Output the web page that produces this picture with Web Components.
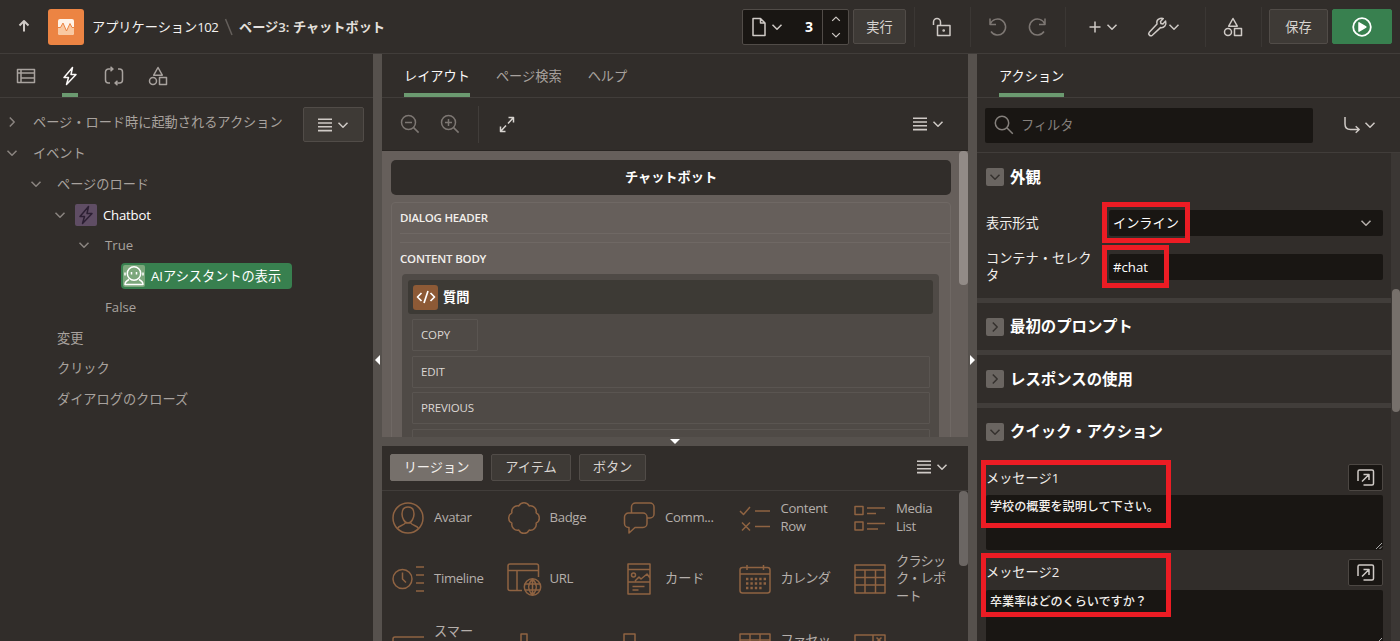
<!DOCTYPE html>
<html lang="ja">
<head>
<meta charset="utf-8">
<title>ページ・デザイナ</title>
<style>
    html, body { margin: 0; height: 100%; overflow: hidden; background: #312d2a; }
    body {
        --line: #413d3a;
        --splitter: #56514d;
        --field: #191613;
        --button: #3e3a36;
        --muted: #a8a29e;
        font: 13.2px/18px "Open Sans", "Noto Sans CJK JP", sans-serif;
        color: #f2efec;
    }
</style>
</head>
<body>
<page-designer></page-designer>
<script>
const ICONS = {
    up: [16, 16, '<path d="M8 13.5V3M3.5 7.5L8 3l4.5 4.5" stroke-width="2"/>'],
    down: [12, 8, '<path d="M1.5 1.8L6 6.2l4.500-4.400"/>'],
    right: [8, 12, '<path d="M1.800 1.500L6.200 6l-4.400 4.500"/>'],
    slash: [10, 20, '<path d="M1.500 2l6.500 16"/>'],
    file: [16, 20, '<path d="M2 1.500h7.500l4.500 4.500v12.500H2zM9.500 1.500V6H14"/>'],
    lock: [20, 20, '<path d="M5.500 8.500h12.500v10H5.500zM1.500 8V5a3.500 3.500 0 0 1 7 0v3.500"/><circle cx="11.700" cy="13.500" r=".6"/>'],
    undo: [20, 20, '<path d="M2 1.500v6h6M2.200 7A8 8 0 1 1 3 14.500" />'],
    redo: [20, 20, '<path d="M18 1.500v6h-6M17.800 7A8 8 0 1 0 17 14.500" />'],
    plus: [12, 12, '<path d="M6 .5v11M.5 6h11"/>'],
    wrench: [20, 20, '<path d="M13 1.500c2-.6 3-.2 3.300 0L13.500 4.500l.4 2 2 .4 2.700-2.800c1.200 4-1.500 7-5.100 6.500l-8.200 7.600c-2 1.700-4.700-.9-3-3L10 7.100c-.6-2.600.7-4.900 3-5.600z"/>'],
    shapes: [20, 20, '<path d="M10 1.500l4.300 7.700H5.700zM11.500 11.500h7v7h-7z"/><circle cx="5" cy="15" r="3.500"/>'],
    play: [20, 20, '<circle cx="10" cy="10" r="8.800" stroke-width="1.800"/><path d="M7 5.800l6.800 4.200L7 14.200z" fill="currentColor"/>'],
    tree: [20, 16, '<path d="M1.500 1.500h17v13h-17zM5 1.500v13M5 5h13.500M5 10h13.500M1.500 5H5"/>'],
    bolt: [16, 20, '<path d="M10.500 1.500L2 11.500h4.500L4.500 18.500 14 8.500H9z"/>'],
    cycle: [20, 20, '<path d="M6 17H4.500a3 3 0 0 1-3-3V6a3 3 0 0 1 3-3H9M6.500.8L9 3 6.500 5.300M14 3h1.500a3 3 0 0 1 3 3v8a3 3 0 0 1-3 3H11M13.500 14.700L11 17l2.500 2.200"/>'],
    lines: [14, 14, '<path d="M0 1.200h14M0 5h14M0 8.800h14M0 12.600h14" stroke-width="1.600"/>'],
    zoomout: [20, 20, '<circle cx="8.500" cy="8.500" r="7"/><path d="M5 8.500h7M13.600 13.600l5 5"/>'],
    zoomin: [20, 20, '<circle cx="8.500" cy="8.500" r="7"/><path d="M5 8.500h7M8.500 5v7M13.600 13.600l5 5"/>'],
    search: [20, 20, '<circle cx="8" cy="8" r="6.700"/><path d="M12.800 12.800l6 6"/>'],
    expand: [16, 17, '<path d="M9.500 1.500h5v5M14.500 1.500l-5.500 6M1.500 10.500v5h5M1.500 15.500l5.500-6"/>'],
    goto: [18, 18, '<path d="M2 1v7c0 4 2 5.500 5.500 5.500H16M12.700 10.300l3.500 3.200-3.500 3.200"/>'],
    popup: [18, 17, '<path d="M1 12V2.500Q1 1 2.500 1H15q1.500 0 1.500 1.500v12q0 1.500-1.500 1.500H6.500M5 12.500l6.500-6.500M6.500 5.500H12V11" stroke-width="1.500"/>'],
    robot: [22, 22, '<circle cx="11" cy="8.500" r="6.700"/><path d="M8.500 7v2.500M13.500 7v2.500M2 7.500v3M20 7.500v3M6 14.500c-2 1-4 2-4 5h18c0-3-2-4-4-5" stroke-width="1.500"/>'],
    code: [20, 14, '<path d="M5.500 3L1.500 7l4 4M14.500 3l4 4-4 4M12 1L8 13" stroke-width="1.700"/>'],
    wave: [16, 16, '<rect width="16" height="16" rx="2" fill="#fff3e8" stroke="none"/><path d="M0 8H2.500L5 4.500 8.500 11.500 12 5 14 8.500H16V14Q16 16 14 16H2Q0 16 0 14z" fill="#f9c9a2" stroke="none"/><path d="M0 8.500h2.500L5 4l3.500 8L12 4.500l2 4h2" stroke="#ec8443" stroke-width="1"/>'],
    avatar: [32, 32, '<circle cx="16" cy="16" r="15"/><path d="M16 5c4 0 6 3 6 7s-2.500 9-6 9-6-5-6-9 2-7 6-7zM5.500 26.500C7 23 12 24 13.500 20.500M26.500 26.500C25 23 20 24 18.500 20.500"/>'],
    badge: [32, 32, '<path d="M10.800 3.900a5.800 5.800 0 0 1 10.400 0a5.800 5.800 0 0 1 6.900 6.900a5.800 5.800 0 0 1 0 10.400a5.800 5.800 0 0 1-6.900 6.900a5.800 5.800 0 0 1-10.400 0a5.800 5.800 0 0 1-6.900-6.900a5.800 5.800 0 0 1 0-10.400a5.800 5.800 0 0 1 6.900-6.900z"/>'],
    comments: [32, 32, '<path d="M5.500 11h14.500a4 4 0 0 1 4 4v6.500a4 4 0 0 1-4 4H12L6 31v-5.500H5.500a4 4 0 0 1-4-4V15a4 4 0 0 1 4-4zM8.500 11V5a4 4 0 0 1 4-4H27a4 4 0 0 1 4 4v7a4 4 0 0 1-4 4H24"/>'],
    content: [32, 32, '<path d="M1 9l3.500 3.500L11 5M16 9h15M3 20.500l8 8M11 20.500l-8 8M16 24.500h15"/>'],
    media: [32, 32, '<path d="M1 4.500h8v8H1zM1 20h8v8H1zM13 6h18M13 11.500h9M13 21.500h18M13 27h11"/>'],
    timeline: [32, 32, '<circle cx="10.500" cy="16" r="9.500"/><path d="M10.500 9.500v6.500l3.500 3.500M24 4h8M24 12h8M24 20h8M24 28h8"/>'],
    url: [34, 34, '<path d="M15 28.500H3a2 2 0 0 1-2-2V4a2 2 0 0 1 2-2h26.500a2 2 0 0 1 2 2v11M1 8.500h30.500M10 8.500v20"/><circle cx="25.500" cy="25" r="8.200"/><path d="M18 22h15M18 28h15M25.500 17v16M25.500 17c-5 5-5 11 0 16M25.500 17c5 5 5 11 0 16"/>'],
    card: [24, 32, '<path d="M1 1h22v30H1zM1 6.500h22M1 19h22M5.500 23.500h12M5.500 27h6M8 18l4-4 2 2 6-5 3 4"/><circle cx="6.500" cy="12" r="2"/>'],
    calendar: [32, 30, '<rect x="1" y="3.500" width="30" height="25.500" rx="2.500"/><path d="M1 10h30M8 1v5M24.500 1v5"/><path d="M7 15h20M7 19.500h20M7 24h16" stroke-width="2.400" stroke-dasharray="2.400 2"/>'],
    report: [32, 30, '<path d="M1 1h30v28H1zM1 6h30M1 13.500h30M1 21h30M11 6v23M21.500 6v23"/>'],
    filter: [32, 32, '<path d="M32 4H3Q1 4 1 6v26M8 16h20"/>'],
    chart: [32, 32, '<path d="M13 32V1h6v31"/>'],
    flow: [32, 32, '<path d="M1 1h11v8H1zM6 9v15h10"/>'],
    facet: [32, 32, '<path d="M1 32V1h30v31M1 7h30M11 1v31M21 1v31"/>'],
    form: [32, 32, '<path d="M1 32V2h30v30M19 2v10M1 12h30M22.500 4.500l5 5M27.500 4.500l-5 5"/>']
};

// define an element from its markup and scoped styles
function define(tag, css, html) {
    const template = document.createElement('template');
    template.innerHTML = `<style>*{box-sizing:border-box} :host{box-sizing:border-box} ${css}</style>${html}`;
    customElements.define(tag, class extends HTMLElement {
        connectedCallback() {
            if (this.shadowRoot) return;
            this.attachShadow({ mode: 'open' });
            this.shadowRoot.appendChild(template.content.cloneNode(true));
        }
    });
}

class UiIcon extends HTMLElement {
    connectedCallback() {
        const [w, h, body] = ICONS[this.getAttribute('name')];
        this.attachShadow({ mode: 'open' });
        this.shadowRoot.innerHTML = `
            <style>
                :host { display: inline-flex; flex: none; }
                svg { display: block; overflow: visible; }
            </style>
            <svg width="${w}" height="${h}" viewBox="0 0 ${w} ${h}" fill="none" stroke="currentColor"
                stroke-width="1.500" stroke-linejoin="round">${body}</svg>`;
    }
}
customElements.define('ui-icon', UiIcon);

define('ui-button', `
    :host { display: flex; align-items: center; justify-content: center; gap: 6px; flex: none;
        height: 35px; background: var(--button); border: 1px solid #514c48; border-radius: 2px; color: #d8d4d0; }
    :host([primary]) { background: #38804f; border-color: #38804f; color: #fff; }
    :host([on]) { background: #76706b; border-color: #76706b; color: #f2efec; }
    :host([small]) { height: 27px; }
    :host([dark]) { background: var(--field); border: 1px solid #4c4743; height: 27px; width: 35px; color: #cfcac6; }
`, '<slot></slot>');

define('menu-button', `
    :host { display: flex; align-items: center; gap: 5px; color: #cfcac6; flex: none; }
`, '<ui-icon name="lines"></ui-icon><ui-icon name="down"></ui-icon>');

define('ui-tab', `
    :host { display: flex; align-items: center; height: 43px; color: var(--muted); border-bottom: 4px solid transparent; padding-top: 4px; flex: none; }
    :host([on]) { color: #fbf9f8; border-color: #6b9a70; }
`, '<slot></slot>');

define('tab-bar', `
    :host { display: flex; height: 44px; border-bottom: 1px solid var(--line); flex: none; }
`, '<slot></slot>');

define('app-header', `
    :host { display: flex; align-items: center; height: 54px; border-bottom: 1px solid var(--line); flex: none; color: #cfcac6; }
    .logo { width: 36px; height: 36px; border-radius: 3px; background: #ec8443; display: grid; place-items: center; margin: 0 8px 0 16px; }
    .crumb { width: 132px; white-space: nowrap; color: #f5f3f1; }
    .crumb i { font-style: normal; letter-spacing: -.6px; }
    .page { width: 356px; white-space: nowrap; font-weight: 600; color: #e4e0dd; }
    .up { width: 32px; padding-left: 16px; padding-top: 3px; }
    .slash { width: 15px; color: #65605c; display: flex; }
    .picker { display: flex; width: 107px; height: 36px; background: var(--field); border: 1px solid #514c48; border-radius: 2px; margin-right: 4px; align-items: center; }
    .picker b { flex: 1; text-align: right; padding-right: 9px; color: #fff; font-size: 14px; }
    .picker > ui-icon:first-child { margin: 0 4px 0 8px; }
    .spin { width: 26px; height: 100%; border-left: 1px solid #514c48; display: flex; flex-direction: column; align-items: center; justify-content: space-between; padding: 5px 0; }
    .spin ui-icon { transform: scale(.85); }
    .spin ui-icon:first-child { transform: scale(.85, -.85); }
    .cell { display: flex; align-items: center; justify-content: center; gap: 5px; height: 40px; border-left: 1px solid #3b3734; padding-right: 2px; }
`, `
    <span class="up"><ui-icon name="up"></ui-icon></span>
    <span class="logo"><ui-icon name="wave"></ui-icon></span>
    <span class="crumb">アプリケーション<i>102</i></span>
    <span class="slash"><ui-icon name="slash"></ui-icon></span>
    <span class="page">ページ3: チャットボット</span>
    <span style="margin-left:auto"></span>
    <span class="picker"><ui-icon name="file"></ui-icon><ui-icon name="down"></ui-icon><b>3</b>
        <span class="spin"><ui-icon name="down"></ui-icon><ui-icon name="down"></ui-icon></span></span>
    <ui-button style="width:53px;margin-right:8px">実行</ui-button>
    <span class="cell" style="width:56px"><ui-icon name="lock"></ui-icon></span>
    <span class="cell" style="width:95px;gap:19px;color:#7d7773"><ui-icon name="undo"></ui-icon><ui-icon name="redo"></ui-icon></span>
    <span class="cell" style="width:140px"><ui-icon name="plus"></ui-icon><ui-icon name="down" style="margin-right:24px"></ui-icon><ui-icon name="wrench"></ui-icon><ui-icon name="down" style="margin-left:-4px"></ui-icon></span>
    <span class="cell" style="width:56px"><ui-icon name="shapes"></ui-icon></span>
    <span class="cell" style="width:8px"></span>
    <ui-button style="width:59px;margin-right:4px">保存</ui-button>
    <ui-button primary style="width:60px;margin-right:8px"><ui-icon name="play"></ui-icon></ui-button>
`);

define('tree-row', `
    :host { display: flex; align-items: center; height: 30.750px; color: var(--muted); white-space: nowrap; }
    .toggle { width: 12px; display: flex; justify-content: center; margin-right: 15px; color: #8b8581; }
`, '<span class="toggle"><slot name="toggle"></slot></span><slot></slot>');

define('action-tree', `
    :host { display: flex; flex-direction: column; width: 373px; flex: none; }
    tab-bar { padding-left: 16px; }
    .main { display: flex; height: 500px; padding-top: 9px; }
    .rows { width: 303px; flex: none; }
    .chat { display: flex; width: 22px; height: 22px; background: #5f4d64; border-radius: 2px; color: #2c1f33; align-items: center; justify-content: center; margin: 0 6px 0 -6px; }
    .sel { display: flex; align-items: center; height: 26px; width: 171px; background: #38804f; border-radius: 4px; color: #fff; padding-left: 2px; margin-left: -3px; }
    .sel i { display: flex; width: 22px; height: 22px; background: #7ca77c; margin-right: 6px; border-radius: 2px; }
    .e { color: #fff; letter-spacing: -.2px; }
`, `
    <tab-bar>
        <ui-tab style="margin-right:26px"><ui-icon name="tree"></ui-icon></ui-tab>
        <ui-tab on style="margin-right:26px"><ui-icon name="bolt"></ui-icon></ui-tab>
        <ui-tab style="margin-right:24px"><ui-icon name="cycle"></ui-icon></ui-tab>
        <ui-tab><ui-icon name="shapes"></ui-icon></ui-tab>
    </tab-bar>
    <div class="main">
        <div class="rows">
            <tree-row style="padding-left:6px"><ui-icon slot="toggle" name="right"></ui-icon>ページ・ロード時に起動されるアクション</tree-row>
            <tree-row style="padding-left:6px"><ui-icon slot="toggle" name="down"></ui-icon>イベント</tree-row>
            <tree-row style="padding-left:30px"><ui-icon slot="toggle" name="down"></ui-icon>ページのロード</tree-row>
            <tree-row style="padding-left:54px"><ui-icon slot="toggle" name="down"></ui-icon><span class="chat"><ui-icon name="bolt"></ui-icon></span><span class="e">Chatbot</span></tree-row>
            <tree-row style="padding-left:78px"><ui-icon slot="toggle" name="down"></ui-icon>True</tree-row>
            <tree-row style="padding-left:97px"><span class="sel"><i><ui-icon name="robot"></ui-icon></i>AIアシスタントの表示</span></tree-row>
            <tree-row style="padding-left:78px">False</tree-row>
            <tree-row style="padding-left:30px">変更</tree-row>
            <tree-row style="padding-left:30px">クリック</tree-row>
            <tree-row style="padding-left:30px">ダイアログのクローズ</tree-row>
        </div>
        <ui-button style="width:61px"><menu-button></menu-button></ui-button>
    </div>
`);

define('split-bar', `
    :host { display: flex; align-items: center; justify-content: center; width: 9px; background: var(--splitter); flex: none; padding-top: 25px; }
    :host([row]) { width: auto; height: 9px; padding: 0; }
    i { border: 5px solid transparent; border-right-color: #fff; border-left: 0; }
    :host([dir=right]) i { border: 5px solid transparent; border-left-color: #fff; border-right: 0; }
    :host([row]) i { border: 5px solid transparent; border-top-color: #fff; border-bottom: 0; }
`, '<i></i>');

define('layout-slot', `
    :host { display: flex; align-items: center; height: 32px; margin: 0 0 4.600px 4px; width: 518px; border: 1px solid #5a5551; padding-left: 8px; font-size: 11.500px; letter-spacing: -.15px; color: #dcd8d4; border-radius: 1px; flex: none; }
`, '<slot></slot>');

define('layout-canvas', `
    :host { display: flex; height: 286px; background: #665f5b; padding: 9px 0 0 9px; overflow: hidden; flex: none; }
    .page { width: 560px; }
    .title { height: 35px; border-radius: 5px; background: #312d2a; text-align: center; line-height: 35px; font-weight: 700; color: #fff; margin-bottom: 7px; }
    .body { border: 1px solid #6f6864; border-radius: 4px; height: 300px; padding: 0 0 0 8px; }
    .head { font-weight: 600; font-size: 11.500px; letter-spacing: -.25px; height: 31px; line-height: 30px; border-bottom: 1px solid #6f6864; margin-bottom: 8px; }
    .content { font-weight: 600; font-size: 11.500px; letter-spacing: -.2px; height: 32px; line-height: 31px; border-top: 1px solid #6f6864; }
    .region { margin-left: 2px; width: 537px; height: 240px; background: #4f4a46; border-radius: 4px 4px 0 0; padding: 6px; }
    .bar { display: flex; align-items: center; height: 34px; background: #3d3a35; border-radius: 3px; padding-left: 5px; font-weight: 700; color: #fff; margin-bottom: 5px; }
    .code { display: flex; width: 25px; height: 25px; align-items: center; justify-content: center; background: #8d5a36; border-radius: 3px; margin-right: 5px; }
    .thumb { margin: -9px 0 0 8px; width: 9px; height: 134px; border-radius: 4px; background: #928b87; }
`, `
    <div class="page">
        <div class="title">チャットボット</div>
        <div class="body">
            <div class="head">DIALOG HEADER</div>
            <div class="content">CONTENT BODY</div>
            <div class="region">
                <div class="bar"><span class="code"><ui-icon name="code"></ui-icon></span>質問</div>
                <layout-slot style="width:66px">COPY</layout-slot>
                <layout-slot>EDIT</layout-slot>
                <layout-slot>PREVIOUS</layout-slot>
                <layout-slot></layout-slot>
            </div>
        </div>
    </div>
    <div class="thumb"></div>
`);

define('gallery-item', `
    :host { display: flex; align-items: center; color: #b5afab; line-height: 17.500px; }
    :host([latin]) { letter-spacing: -.35px; }
    .icon { width: 32px; display: flex; justify-content: center; margin-right: 10px; color: #8f6342; flex: none; }
`, '<span class="icon"><slot name="icon"></slot></span><slot></slot>');

define('component-gallery', `
    :host { display: flex; flex-direction: column; flex: 1; overflow: hidden; min-height: 0; }
    .tabs { display: flex; align-items: center; height: 45px; border-bottom: 1px solid var(--line); padding: 0 20px 2px 8px; gap: 8px; flex: none; }
    .tabs menu-button { margin-left: auto; }
    .main { display: flex; height: 200px; padding-left: 10px; }
    .grid { display: grid; width: 567px; flex: none; grid-template-columns: repeat(5, 115.500px); grid-template-rows: 53px 53px 70px; row-gap: 8.500px; align-content: start; white-space: nowrap; }
    .thumb { width: 9px; height: 75px; border-radius: 4px; background: #6b6663; }
`, `
    <div class="tabs">
        <ui-button small on style="width:93px">リージョン</ui-button>
        <ui-button small style="width:80px">アイテム</ui-button>
        <ui-button small style="width:67px">ボタン</ui-button>
        <menu-button></menu-button>
    </div>
    <div class="main">
        <div class="grid">
            <gallery-item latin><ui-icon slot="icon" name="avatar"></ui-icon>Avatar</gallery-item>
            <gallery-item latin><ui-icon slot="icon" name="badge"></ui-icon>Badge</gallery-item>
            <gallery-item latin><ui-icon slot="icon" name="comments"></ui-icon>Comm...</gallery-item>
            <gallery-item latin><ui-icon slot="icon" name="content"></ui-icon><span>Content<br>Row</span></gallery-item>
            <gallery-item latin><ui-icon slot="icon" name="media"></ui-icon><span>Media<br>List</span></gallery-item>
            <gallery-item latin><ui-icon slot="icon" name="timeline"></ui-icon>Timeline</gallery-item>
            <gallery-item latin><ui-icon slot="icon" name="url"></ui-icon>URL</gallery-item>
            <gallery-item><ui-icon slot="icon" name="card"></ui-icon>カード</gallery-item>
            <gallery-item><ui-icon slot="icon" name="calendar"></ui-icon><span style="letter-spacing:-.8px">カレンダ</span></gallery-item>
            <gallery-item><ui-icon slot="icon" name="report"></ui-icon><span style="letter-spacing:-.8px">クラシッ<br>ク・レポ<br>ート</span></gallery-item>
            <gallery-item><ui-icon slot="icon" name="filter"></ui-icon><span style="height:53px">スマー</span></gallery-item>
            <gallery-item><ui-icon slot="icon" name="chart"></ui-icon></gallery-item>
            <gallery-item><ui-icon slot="icon" name="flow"></ui-icon></gallery-item>
            <gallery-item><ui-icon slot="icon" name="facet"></ui-icon><span style="height:35px;letter-spacing:-.8px">ファセッ</span></gallery-item>
            <gallery-item><ui-icon slot="icon" name="form"></ui-icon></gallery-item>
        </div>
        <div class="thumb"></div>
    </div>
`);

define('layout-panel', `
    :host { display: flex; flex-direction: column; width: 586px; flex: none; }
    tab-bar { padding-left: 22px; gap: 26px; }
    .tools { display: flex; align-items: center; height: 53px; padding: 0 24px 0 18px; border-bottom: 1px solid #292522; flex: none; color: #7d7773; }
    .tools hr { width: 1px; height: 37px; border: 0; background: var(--line); margin: 0 20px 0 18px; }
    .tools menu-button { margin-left: auto; }
`, `
    <tab-bar><ui-tab on>レイアウト</ui-tab><ui-tab>ページ検索</ui-tab><ui-tab>ヘルプ</ui-tab></tab-bar>
    <div class="tools">
        <ui-icon name="zoomout" style="margin-right:20px"></ui-icon><ui-icon name="zoomin"></ui-icon><hr>
        <ui-icon name="expand" style="color:#d8d4d0"></ui-icon><menu-button></menu-button>
    </div>
    <layout-canvas></layout-canvas>
    <split-bar row></split-bar>
    <component-gallery></component-gallery>
`);

define('prop-group', `
    :host { display: block; border-bottom: 5px solid #413d3a; padding: 15px 8px 14.500px; flex: none; }
    .head { display: flex; align-items: center; height: 18px; gap: 6px; font-size: 15.400px; font-weight: 700; color: #fff; }
    .toggle { display: flex; width: 18px; height: 18px; align-items: center; justify-content: center; background: #6a6561; border-radius: 2px; color: #35312e; margin-left: 1px; }
    .title { padding-top: 1px; }
`, '<div class="head"><span class="toggle"><slot name="toggle"></slot></span><span class="title"><slot name="title"></slot></span></div><slot></slot>');

define('prop-row', `
    :host { display: flex; align-items: center; }
    .label { width: 110px; margin-right: 14px; line-height: 17px; padding-left: 1px; }
    .field { display: flex; align-items: center; justify-content: space-between; width: 274px; height: 26px; background: var(--field); border-radius: 2px; padding: 0 11px 0 4px; color: #fff; }
`, '<span class="label"><slot name="label"></slot></span><span class="field"><slot></slot></span>');

define('prop-text', `
    :host { display: block; height: 94.500px; }
    .top { display: flex; align-items: center; justify-content: space-between; height: 27px; margin-bottom: 4px; padding-left: 1px; }
    .area { display: flex; justify-content: space-between; width: 397px; margin-left: 1px; height: 55px; background: var(--field); border-radius: 2px; padding: 3px 0 0 4px; font-size: 12.100px; font-weight: 500; color: #f2efec; }
    svg { align-self: flex-end; }
`, `
    <div class="top"><slot name="label"></slot><ui-button dark><ui-icon name="popup"></ui-icon></ui-button></div>
    <div class="area"><span><slot></slot></span><svg width="7" height="7" stroke="#aaa" fill="none"><path d="M0 6L6 0M3.500 6L6 3.500"/></svg></div>
`);

define('callout-box', `
    :host { display: block; position: absolute; border: 5px solid #ec1c24; }
`, '');

define('property-panel', `
    :host { display: flex; flex-direction: column; flex: 1; min-width: 0; }
    tab-bar { padding-left: 22px; }
    .search { display: flex; align-items: center; height: 55px; padding: 0 24px 0 8px; border-bottom: 1px solid var(--line); flex: none; justify-content: space-between; color: #cfcac6; gap: 3px; }
    .box { display: flex; align-items: center; width: 328px; height: 35px; background: var(--field); border-radius: 2px; padding-left: 9px; gap: 7px; color: #85807c; margin-right: auto; }
    .main { display: flex; height: 488px; }
    .list { width: 414px; display: flex; flex-direction: column; }
    .track { width: 9px; background: #3b3734; padding: 136px 0 0 1px; }
    .track i { display: block; height: 123px; border-radius: 4px; background: #76706b; }
`, `
    <tab-bar><ui-tab on>アクション</ui-tab></tab-bar>
    <div class="search"><span class="box"><ui-icon name="search"></ui-icon>フィルタ</span><ui-icon name="goto"></ui-icon><ui-icon name="down"></ui-icon></div>
    <div class="main">
        <div class="list">
            <prop-group style="height:149.500px"><ui-icon slot="toggle" name="down"></ui-icon><span slot="title">外観</span>
                <prop-row style="height:26px;margin-top:24px"><span slot="label">表示形式</span><span>インライン</span><ui-icon name="down" style="color:#b5afab"></ui-icon></prop-row>
                <prop-row style="height:36px;margin-top:13px"><span slot="label">コンテナ・セレクタ</span><span>#chat</span></prop-row>
            </prop-group>
            <prop-group><ui-icon slot="toggle" name="right"></ui-icon><span slot="title">最初のプロンプト</span></prop-group>
            <prop-group><ui-icon slot="toggle" name="right"></ui-icon><span slot="title">レスポンスの使用</span></prop-group>
            <prop-group><ui-icon slot="toggle" name="down"></ui-icon><span slot="title">クイック・アクション</span>
                <prop-text style="margin-top:23.500px"><span slot="label">メッセージ1</span>学校の概要を説明して下さい。</prop-text>
                <prop-text><span slot="label">メッセージ2</span>卒業率はどのくらいですか？</prop-text>
            </prop-group>
        </div>
        <div class="track"><i></i></div>
    </div>
`);

define('page-designer', `
    :host { display: flex; flex-direction: column; width: 1400px; height: 641px; overflow: hidden; position: relative; background: #312d2a; }
    .panels { display: flex; flex: 1; min-height: 0; }
`, `
    <app-header></app-header>
    <div class="panels">
        <action-tree></action-tree>
        <split-bar></split-bar>
        <layout-panel></layout-panel>
        <split-bar dir="right"></split-bar>
        <property-panel></property-panel>
    </div>
    <callout-box style="left:1102px;top:202px;width:88px;height:41px"></callout-box>
    <callout-box style="left:1102px;top:245px;width:67px;height:43px"></callout-box>
    <callout-box style="left:981px;top:460px;width:190px;height:68px"></callout-box>
    <callout-box style="left:981px;top:553px;width:190px;height:64px"></callout-box>
`);
</script>
</body>
</html>
